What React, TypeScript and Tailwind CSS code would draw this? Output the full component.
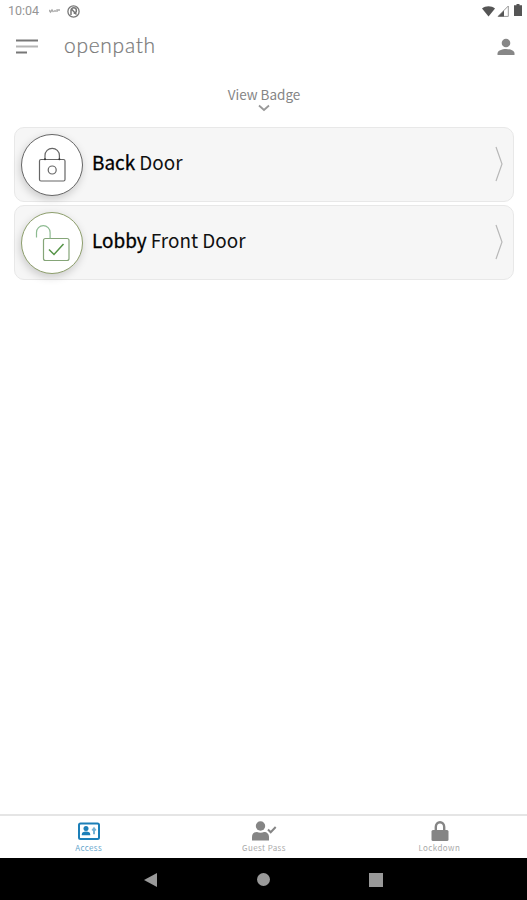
import type { ReactNode } from 'react';

interface Door {
  bold: string;
  rest: string;
  unlocked: boolean;
}

const doors: Door[] = [
  { bold: 'Back', rest: 'Door', unlocked: false },
  { bold: 'Lobby', rest: 'Front Door', unlocked: true },
];

function StatusBar() {
  return (
    <div className="flex h-[22px] items-center pl-[8px] pr-[5px]">
      <span className="w-[41px] font-['Roboto'] text-[12.5px] leading-none text-[#959595]">10:04</span>
      <svg className="h-[6px] w-[11px]" viewBox="0 0 11 6" fill="none" stroke="#aaa">
        <path d="M0 2l1.500 2 1.500-2 1.500 2M5 3h2M8 4V2h3" strokeWidth="1.400" />
      </svg>
      <svg className="ml-[7px] h-[13px] w-[13px]" viewBox="0 0 13 13" fill="none" stroke="#777">
        <circle cx="6.500" cy="6.500" r="5.600" strokeWidth="1.300" />
        <path d="M4 10V5.500a2.700 2.700 0 1 1 2.700 2.700M4 3.500l5.500 6" strokeWidth="1.500" />
      </svg>
      <svg className="ml-auto h-[11px] w-[13px]" viewBox="0 0 13 11" fill="#555">
        <path d="M0 2.500C3.500-.4 9.500-.4 13 2.500L6.500 10.500z" />
      </svg>
      <svg className="ml-[2px] h-[12px] w-[12px]" viewBox="0 0 12 12">
        <path d="M11.300 1v10.400H1z" fill="#fff" stroke="#999" strokeWidth="1" />
        <path d="M7 5.500v6H1z" fill="#555" />
      </svg>
      <svg className="-mt-[2px] ml-[5px] h-[12px] w-[8px]" viewBox="0 0 8 12" fill="#555">
        <path d="M2.500 0h3v1.200H8V12H0V1.200h2.500z" />
      </svg>
    </div>
  );
}

function Header() {
  return (
    <header className="flex h-[48px] items-center pl-[16px] pr-[12px]">
      <svg className="h-[15px] w-[22px]" viewBox="0 0 22 15">
        <path d="M0 1.500h22" stroke="#777" strokeWidth="2" />
        <path d="M0 7.500h22" stroke="#b5b5b5" strokeWidth="2" />
        <path d="M0 13.500h11" stroke="#777" strokeWidth="2" />
      </svg>
      <span className="-mt-[4px] ml-[26px] font-['Lato'] text-[21px] font-light leading-none tracking-[0.7px] text-[#777] [-webkit-text-stroke:0.2px_#777]">
        openpath
      </span>
      <svg className="ml-auto mt-[1px] h-[18px] w-[18px]" viewBox="0 0 18 18" fill="#878787">
        <circle cx="9" cy="5" r="4.300" />
        <path d="M.5 17v-1.500C.5 12.500 5 11 9 11s8.500 1.500 8.500 4.500V17z" />
      </svg>
    </header>
  );
}

function LockIcon() {
  return (
    <svg className="h-[62px] w-[62px]" viewBox="0 0 62 62" fill="none" stroke="#666" strokeWidth="1.200">
      <rect x="18.500" y="25.500" width="25.500" height="21.500" rx="1.500" />
      <path d="M24 25v-3.500a7.200 7.200 0 0 1 14.400 0V25" />
      <circle cx="31.200" cy="36" r="4" />
      <circle cx="24" cy="25.300" r="1" fill="#333" stroke="none" />
      <circle cx="38.400" cy="25.300" r="1" fill="#333" stroke="none" />
    </svg>
  );
}

function UnlockIcon() {
  return (
    <svg className="h-[62px] w-[62px]" viewBox="0 0 62 62" fill="none">
      <rect x="22.500" y="26.500" width="25.500" height="22" rx="2" stroke="#85a578" strokeWidth="1.200" />
      <path d="M15.500 25.500v-5a6.800 6.800 0 0 1 13.600 0v6" stroke="#8dbb91" strokeWidth="1.200" />
      <path d="M28 37.500l5 5 9.500-10.500" stroke="#559447" strokeWidth="1.500" />
    </svg>
  );
}

function DoorCard({ door }: { door: Door }) {
  return (
    <div className="flex h-[75px] items-center rounded-[10px] border border-[#e8e8e8] bg-[#f6f6f6] pl-[6px] pr-[10px]">
      <div
        className={`h-[62px] w-[62px] rounded-full border bg-white shadow-[-1px_3px_9px_rgba(0,0,0,0.18)] ${
          door.unlocked ? 'border-[#8d9e6c]' : 'border-[#666]'
        }`}
      >
        <div className="-ml-px -mt-px">{door.unlocked ? <UnlockIcon /> : <LockIcon />}</div>
      </div>
      <p className="-mt-[4px] ml-[9px] font-['Noto_Sans_CJK_SC',sans-serif] text-[18.9px] leading-none text-[#111]">
        <span className="text-black [-webkit-text-stroke:0.3px_black]">{door.bold}</span> {door.rest}
      </p>
      <svg className="-mt-[2px] ml-auto h-[36px] w-[8px]" viewBox="0 0 8 36" fill="none" stroke="#b8b8b8" strokeWidth="1.200">
        <path d="M1 1l6 17-6 17" />
      </svg>
    </div>
  );
}

function NavItem({ label, active, children }: { label: string; active?: boolean; children: ReactNode }) {
  return (
    <button className={`flex flex-1 flex-col items-center pt-[5px] ${active ? 'text-[#1c7fb8]' : 'text-[#858585]'}`}>
      {children}
      <span className="mt-[2px] font-['Noto_Sans_CJK_SC',sans-serif] text-[8px] leading-[10px] tracking-[0.4px] opacity-70">
        {label}
      </span>
    </button>
  );
}

export default function App() {
  return (
    <div className="flex h-screen w-full flex-col overflow-hidden bg-white">
      <StatusBar />
      <Header />

      {/* Badge toggle */}
      <div className="flex h-[57px] flex-col items-center pl-[1px] pt-[16px]">
        <span className="font-['Noto_Sans_CJK_SC',sans-serif] text-[13.5px] leading-[16px] text-[#858585]">
          View Badge
        </span>
        <svg className="mt-[2px] h-[8px] w-[12px]" viewBox="0 0 12 8" fill="none" stroke="#999" strokeWidth="1.800">
          <path d="M1 1.500l5 4.500 5-4.500" />
        </svg>
      </div>

      {/* Doors */}
      <main className="flex flex-1 flex-col gap-[3px] pl-[14px] pr-[13px]">
        {doors.map((door) => (
          <DoorCard key={door.bold} door={door} />
        ))}
      </main>

      {/* Tabs */}
      <nav className="flex h-[44px] border-t-2 border-[#e5e5e5] bg-white pl-px">
        <NavItem label="Access" active>
          <svg className="h-[20px] w-[24px]" viewBox="0 0 24 20" fill="currentColor">
            <rect x="2" y="2.500" width="20" height="15.500" rx="1.500" fill="none" stroke="currentColor" strokeWidth="2" />
            <circle cx="9" cy="7.600" r="2.500" />
            <path d="M4.800 14.300v-1c0-1.800 1.500-2.800 4.200-2.800s4.200 1 4.200 2.800v1z" />
            <path d="M17 5.800l2.500 3.300-1.500 1v3.200h-2v-3.200l-1.500-1z" opacity=".6" />
          </svg>
        </NavItem>
        <NavItem label="Guest Pass">
          <svg className="h-[20px] w-[26px]" viewBox="0 0 26 20" fill="currentColor">
            <circle cx="9.500" cy="5" r="4.700" />
            <path d="M1 19.500V16c0-3 2-5 5-5 2 1 5 1 7 0 3 0 5 2 5 5v3.500z" />
            <path d="M17 8.500l2.700 2.700 5-5.200" fill="none" stroke="currentColor" strokeWidth="2" />
          </svg>
        </NavItem>
        <NavItem label="Lockdown">
          <svg className="ml-[2px] h-[20px] w-[18px]" viewBox="0 0 18 20" fill="currentColor">
            <rect x=".5" y="9" width="17" height="11" rx="1.500" />
            <path d="M4.800 10V6a4.200 4.800 0 0 1 8.400 0v4" fill="none" stroke="currentColor" strokeWidth="2.400" />
          </svg>
        </NavItem>
      </nav>

      {/* System navigation */}
      <div className="flex h-[42px] items-center justify-center gap-[99px] bg-black pt-px">
        <svg className="h-[14px] w-[14px]" viewBox="0 0 14 14" fill="#999">
          <path d="M0 7L13 0v14z" />
        </svg>
        <div className="h-[13px] w-[13px] rounded-full bg-[#999]" />
        <div className="h-[14px] w-[14px] bg-[#999]" />
      </div>
    </div>
  );
}
